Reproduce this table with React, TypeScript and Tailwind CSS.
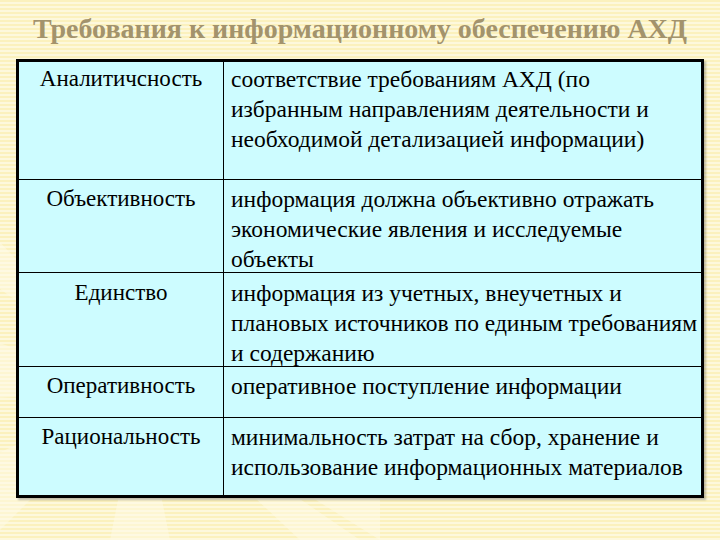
import React from "react";

const rows: { left: string; right: string[]; h: string; pt: string }[] = [
  {
    left: "Аналитичсность",
    right: [
      "соответствие требованиям АХД (по",
      "избранным направлениям деятельности и",
      "необходимой детализацией информации)",
    ],
    h: "h-[117px]",
    pt: "pt-[2px]",
  },
  {
    left: "Объективность",
    right: [
      "информация должна объективно отражать",
      "экономические явления и исследуемые",
      "объекты",
    ],
    h: "h-[93px]",
    pt: "pt-[4px]",
  },
  {
    left: "Единство",
    right: [
      "информация из учетных, внеучетных и",
      "плановых источников по единым требованиям",
      "и содержанию",
    ],
    h: "h-[94px]",
    pt: "pt-[5px]",
  },
  {
    left: "Оперативность",
    right: ["оперативное поступление информации"],
    h: "h-[51px]",
    pt: "pt-[4px]",
  },
  {
    left: "Рациональность",
    right: [
      "минимальность затрат на сбор, хранение и",
      "использование информационных материалов",
    ],
    h: "h-[78px]",
    pt: "pt-[4px]",
  },
];

export default function App() {
  return (
    <div className="relative w-[720px] h-[540px] overflow-hidden bg-[repeating-linear-gradient(180deg,#fbf1bd_0px,#fbf1bd_2px,#fdf8dc_2px,#fdf8dc_4px)] font-['Liberation_Serif',serif]">
      <svg
        className="absolute left-0 top-0 w-[720px] h-[540px] pointer-events-none"
        viewBox="0 0 720 540"
      >
        <g fill="#fffbe8" opacity="0.5">
          <polygon points="140,390 -40,200 -40,260" />
          <polygon points="140,390 -40,330 -40,400" />
          <polygon points="140,390 -40,470 -10,540" />
          <polygon points="140,390 110,540 170,540" />
          <polygon points="140,390 300,540 360,540" />
          <polygon points="140,390 380,500 380,540" />
        </g>
      </svg>
      <div className="relative flex flex-col">
        <div className="h-[59px] flex items-center justify-center pb-[2px]">
          <h1 className="font-['Liberation_Serif',serif] text-[28px] font-bold text-[#a3936c] whitespace-nowrap">
            Требования к информационному обеспечению АХД
          </h1>
        </div>
        <div className="ml-[16px] w-[688px] border-[3px] border-black bg-[#cdfcff] shadow-[2px_2px_2px_rgba(0,0,0,0.25)] flex flex-col">
          {rows.map((r, i) => (
            <div
              key={i}
              className={`flex ${r.h} ${i > 0 ? "border-t-[1.5px] border-black" : ""}`}
            >
              <div
                className={`w-[204px] shrink-0 text-center ${r.pt} font-['Liberation_Serif',serif] text-[23px] leading-[30px] text-black whitespace-nowrap`}
              >
                {r.left}
              </div>
              <div
                className={`flex-1 border-l-[1.5px] border-black pl-[7px] ${r.pt} font-['Liberation_Serif',serif] text-[23.5px] leading-[30px] text-black whitespace-nowrap`}
              >
                {r.right.map((l, j) => (
                  <div key={j}>{l}</div>
                ))}
              </div>
            </div>
          ))}
        </div>
      </div>
    </div>
  );
}
